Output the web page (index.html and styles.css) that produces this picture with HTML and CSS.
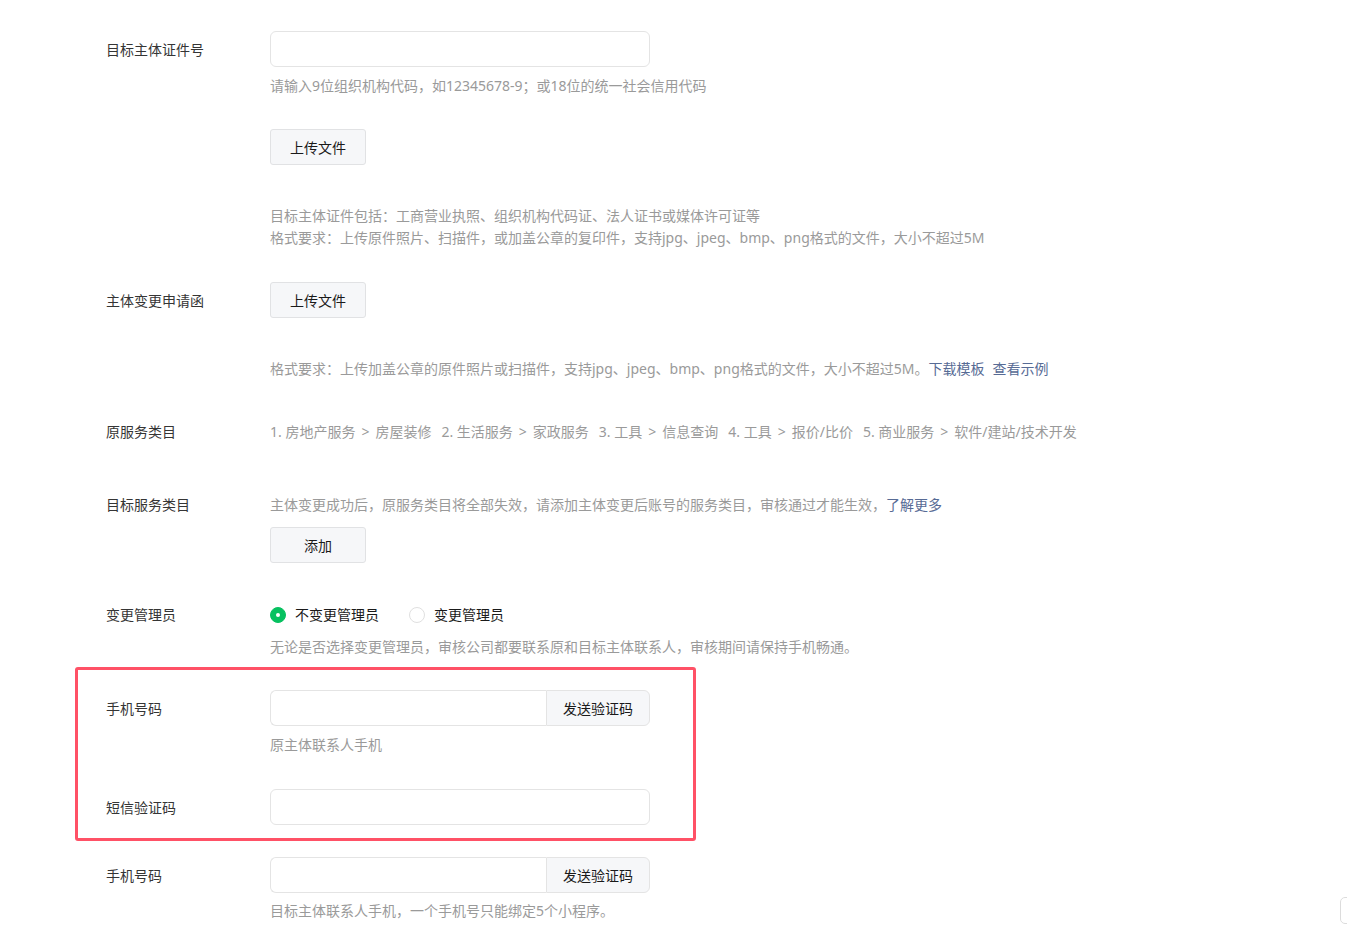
FILE: index.html
```html
<!DOCTYPE html>
<html lang="zh-CN">
<head>
    <meta charset="UTF-8">
    <meta name="viewport" content="width=device-width, initial-scale=1.0">
    <title>主体变更</title>
    <link rel="stylesheet" href="styles.css">
</head>
<body>
    <div class="form">
        <div class="form-item item-first">
            <label class="form-label label-input">目标主体证件号</label>
            <div class="form-control">
                <input type="text" class="text-input">
                <p class="tips tips-input">请输入9位组织机构代码，如12345678-9；或18位的统一社会信用代码</p>
                <button class="btn upload-first">上传文件</button>
                <p class="tips tips-block">目标主体证件包括：工商营业执照、组织机构代码证、法人证书或媒体许可证等<br>格式要求：上传原件照片、扫描件，或加盖公章的复印件，支持jpg、jpeg、bmp、png格式的文件，大小不超过5M</p>
            </div>
        </div>

        <div class="form-item item-letter">
            <label class="form-label label-input">主体变更申请函</label>
            <div class="form-control">
                <button class="btn">上传文件</button>
                <p class="tips tips-block">格式要求：上传加盖公章的原件照片或扫描件，支持jpg、jpeg、bmp、png格式的文件，大小不超过5M。<a href="#" class="link">下载模板</a><a href="#" class="link link-gap">查看示例</a></p>
            </div>
        </div>

        <div class="form-item item-old">
            <label class="form-label">原服务类目</label>
            <div class="form-control">
                <p class="category">
                    <span class="cat">1. 房地产服务<span class="sep">&gt;</span>房屋装修</span>
                    <span class="cat">2. 生活服务<span class="sep">&gt;</span>家政服务</span>
                    <span class="cat">3. 工具<span class="sep">&gt;</span>信息查询</span>
                    <span class="cat">4. 工具<span class="sep">&gt;</span>报价/比价</span>
                    <span class="cat">5. 商业服务<span class="sep">&gt;</span>软件/建站/技术开发</span>
                </p>
            </div>
        </div>

        <div class="form-item item-target">
            <label class="form-label">目标服务类目</label>
            <div class="form-control">
                <p class="tips">主体变更成功后，原服务类目将全部失效，请添加主体变更后账号的服务类目，审核通过才能生效，<a href="#" class="link">了解更多</a></p>
                <button class="btn btn-add">添加</button>
            </div>
        </div>

        <div class="form-item item-admin">
            <label class="form-label">变更管理员</label>
            <div class="form-control">
                <div class="radio-group">
                    <label class="radio"><span class="radio-dot checked"></span>不变更管理员</label>
                    <label class="radio"><span class="radio-dot"></span>变更管理员</label>
                </div>
                <p class="tips tips-radio">无论是否选择变更管理员，审核公司都要联系原和目标主体联系人，审核期间请保持手机畅通。</p>
            </div>
        </div>

        <div class="highlight">
            <div class="form-item">
                <label class="form-label label-input">手机号码</label>
                <div class="form-control">
                    <div class="input-group">
                        <input type="text" class="group-input">
                        <button class="group-btn">发送验证码</button>
                    </div>
                    <p class="tips tips-input">原主体联系人手机</p>
                </div>
            </div>
            <div class="form-item item-sms">
                <label class="form-label label-input">短信验证码</label>
                <div class="form-control">
                    <input type="text" class="text-input">
                </div>
            </div>
        </div>

        <div class="form-item item-phone">
            <label class="form-label label-input">手机号码</label>
            <div class="form-control">
                <div class="input-group">
                    <input type="text" class="group-input">
                    <button class="group-btn">发送验证码</button>
                </div>
                <p class="tips tips-last">目标主体联系人手机，一个手机号只能绑定5个小程序。</p>
            </div>
        </div>
    </div>

    <div class="side-tab"></div>
</body>
</html>
```

FILE: styles.css
```css
body {
    margin: 0;
    font-family: "Noto Sans", "Noto Sans CJK SC", sans-serif;
    font-size: 14px;
    color: #353535;
    background: #fff;
}

.form {
    padding-left: 106px;
}

.form-item {
    display: flex;
}

.form-label {
    width: 164px;
    flex-shrink: 0;
    line-height: 22px;
    color: #353535;
}

.label-input {
    line-height: 36px;
    padding-top: 1px;
}

.form-control {
    width: 900px;
}

p {
    margin: 0;
}

.text-input {
    display: block;
    width: 380px;
    height: 36px;
    box-sizing: border-box;
    border: 1px solid #e4e4e4;
    border-radius: 6px;
    padding: 0 12px;
    font-size: 14px;
    outline: none;
}

.tips {
    line-height: 22px;
    color: #9a9a9a;
}

.tips-input {
    margin-top: 8px;
}

.tips-block {
    margin-top: 40px;
}

.tips-radio {
    margin-top: 10px;
}

.tips-last {
    margin-top: 7px;
}

.link {
    color: #576b95;
    text-decoration: none;
}

.link-gap {
    margin-left: 8px;
}

.btn {
    display: block;
    width: 96px;
    height: 36px;
    padding: 0;
    font-family: inherit;
    font-size: 14px;
    color: #1a1a1a;
    background: #f6f7f9;
    border: 1px solid #e1e2e4;
    border-radius: 3px;
    cursor: pointer;
}

.upload-first {
    margin-top: 32px;
}

.btn-add {
    margin-top: 11px;
}

.item-first {
    margin-top: 31px;
}

.item-letter {
    margin-top: 33px;
}

.item-old {
    margin-top: 41px;
}

.category {
    display: flex;
    gap: 10px;
    line-height: 22px;
    color: #9a9a9a;
    white-space: nowrap;
}

.sep {
    margin: 0 6px;
}

.item-target {
    margin-top: 51px;
}

.item-admin {
    margin-top: 41px;
}

.radio-group {
    display: flex;
    line-height: 22px;
}

.radio {
    display: flex;
    align-items: center;
    margin-right: 30px;
    color: #1a1a1a;
}

.radio-dot {
    width: 16px;
    height: 16px;
    box-sizing: border-box;
    border: 1px solid #e0e0e0;
    border-radius: 50%;
    margin-right: 9px;
    position: relative;
}

.radio-dot.checked {
    background: #07c160;
    border-color: #07c160;
}

.radio-dot.checked::after {
    content: "";
    position: absolute;
    left: 5px;
    top: 5px;
    width: 4px;
    height: 4px;
    border-radius: 50%;
    background: #fff;
}

.highlight {
    margin: 9px 0 0 -31px;
    width: 587px;
    padding: 20px 0 12px 28px;
    border: 3px solid #ff5166;
    border-radius: 3px;
}

.item-sms {
    margin-top: 33px;
}

.item-phone {
    margin-top: 16px;
}

.input-group {
    display: flex;
    width: 380px;
    height: 36px;
}

.group-input {
    flex: 1;
    min-width: 0;
    box-sizing: border-box;
    border: 1px solid #e4e4e4;
    border-right: none;
    border-radius: 6px 0 0 6px;
    padding: 0 12px;
    font-size: 14px;
    outline: none;
}

.group-btn {
    width: 104px;
    font-family: inherit;
    font-size: 14px;
    color: #1a1a1a;
    background: #f6f7f9;
    border: 1px solid #e4e4e4;
    border-radius: 0 6px 6px 0;
    padding: 0;
    cursor: pointer;
}

.side-tab {
    position: fixed;
    right: -20px;
    top: 897px;
    width: 25px;
    height: 25px;
    border: 1px solid #dcdcdc;
    border-radius: 5px;
    background: #fff;
}
```
